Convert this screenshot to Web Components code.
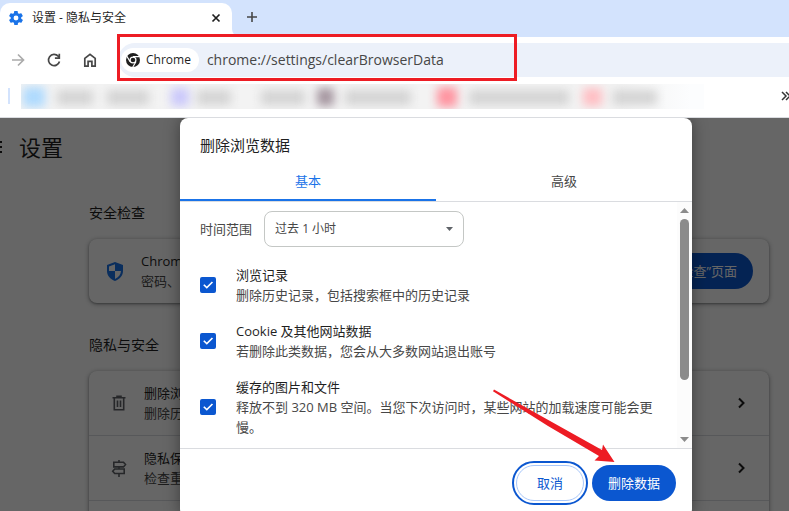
<!DOCTYPE html>
<html lang="zh-CN">
<head>
<meta charset="utf-8">
<meta name="viewport" content="width=device-width, initial-scale=1">
<title>设置 - 隐私与安全</title>
<style>
  body {
    margin: 0;
    font-family: "Open Sans", "Noto Sans CJK SC", sans-serif;
    font-size: 13px;
    line-height: 20px;
    color: #1f1f1f;
    --blue: #0b57d0;
    --muted: #474747;
    --strip: #d3e3fd;
    --mark: #ed1c24;
  }
</style>
</head>
<body>
<browser-window>
  <tab-strip slot="tabs">设置 - 隐私与安全</tab-strip>
  <tool-bar slot="toolbar">
    <address-bar value="chrome://settings/clearBrowserData">Chrome</address-bar>
  </tool-bar>
  <bookmark-bar slot="bookmarks"></bookmark-bar>

  <settings-page heading="设置">
    <settings-section heading="安全检查">
      <settings-row kind="check">
        <settings-icon slot="icon" name="shield"></settings-icon>
        <span slot="title">Chrome</span>
        <span slot="text">密码、</span>
        <pill-button slot="action" kind="filled">转到“安全检查”页面</pill-button>
      </settings-row>
    </settings-section>
    <settings-section heading="隐私与安全">
      <settings-row>
        <settings-icon slot="icon" name="trash"></settings-icon>
        <span slot="title">删除浏览数据</span>
        <span slot="text">删除历史记录</span>
        <settings-icon slot="action" name="chevron"></settings-icon>
      </settings-row>
      <settings-row>
        <settings-icon slot="icon" name="signpost"></settings-icon>
        <span slot="title">隐私保护</span>
        <span slot="text">检查重要</span>
        <settings-icon slot="action" name="chevron"></settings-icon>
      </settings-row>
      <settings-row></settings-row>
    </settings-section>

    <clear-dialog slot="dialog" heading="删除浏览数据">
      <time-range slot="body" label="时间范围">过去 1 小时</time-range>
      <data-option slot="body" label="浏览记录">删除历史记录，包括搜索框中的历史记录</data-option>
      <data-option slot="body" label="Cookie 及其他网站数据">若删除此类数据，您会从大多数网站退出账号</data-option>
      <data-option slot="body" label="缓存的图片和文件">释放不到 320 MB 空间。当您下次访问时，某些网站的加载速度可能会更慢。</data-option>
      <pill-button slot="footer" kind="outlined">取消</pill-button>
      <pill-button slot="footer" kind="filled">删除数据</pill-button>
    </clear-dialog>
  </settings-page>
</browser-window>

<script>
function define(name, render, ready) {
  customElements.define(name, class extends HTMLElement {
    constructor() {
      super();
      this.attachShadow({ mode: 'open' });
    }

    connectedCallback() {
      this.shadowRoot.innerHTML = render(this);
      if (ready) ready(this, this.shadowRoot);
    }
  });
}

define('browser-window', () => `
  <style>
    :host {
      display: flex;
      flex-direction: column;
      position: relative;
      height: 100vh;
      overflow: hidden;
      background: #fff;
    }
    .arrow {
      position: absolute;
      left: 492px;
      top: 388px;
      pointer-events: none;
    }
  </style>
  <slot name="tabs"></slot>
  <slot name="toolbar"></slot>
  <slot name="bookmarks"></slot>
  <slot></slot>
  <svg class="arrow" width="124" height="76" viewBox="0 0 124 76" aria-hidden="true">
    <path fill="var(--mark)" d="M2 1.600 110 62 111 56.500 122.500 74 102.500 72.500 107 68 56 38 1 3.200Z"/>
  </svg>
`);

define('tab-strip', () => `
  <style>
    :host {
      display: flex;
      align-items: flex-end;
      height: 37px;
      background: var(--strip);
    }
    .tab {
      display: flex;
      align-items: center;
      gap: 9px;
      box-sizing: border-box;
      width: 232px;
      height: 34px;
      padding: 0 8px 4px 9px;
      border-radius: 10px 10px 0 0;
      background: #fff;
      font-size: 12px;
    }
    .label { flex: 1; }
    svg { display: block; }
    button {
      padding: 0;
      border: 0;
      background: none;
      color: inherit;
    }
    .new { padding: 0 0 14px 6px; }
  </style>
  <div class="tab">
    <svg width="14" height="14" viewBox="2 2 20 20"><path fill="#1a73e8" d="M19.400 13a7.500 7.500 0 0 0 0-2l2.100-1.600a.5.5 0 0 0 .1-.7l-2-3.400a.5.5 0 0 0-.6-.2l-2.500 1a7.300 7.300 0 0 0-1.700-1l-.4-2.600a.5.5 0 0 0-.5-.5h-4a.5.5 0 0 0-.5.400l-.4 2.700a7.700 7.700 0 0 0-1.700 1L4.900 5.100a.5.5 0 0 0-.6.2l-2 3.400a.5.5 0 0 0 .1.700L4.500 11a8 8 0 0 0 0 2l-2.100 1.600a.5.5 0 0 0-.1.700l2 3.400c.1.200.4.3.6.2l2.500-1c.5.4 1.100.7 1.700 1l.4 2.600c0 .3.2.5.5.5h4c.2 0 .5-.2.500-.5l.4-2.600a7.300 7.300 0 0 0 1.700-1l2.500 1c.2.1.5 0 .6-.2l2-3.400a.5.5 0 0 0-.1-.7zM12 15.500a3.500 3.500 0 1 1 0-7 3.500 3.500 0 0 1 0 7z"/></svg>
    <span class="label"><slot></slot></span>
    <button aria-label="关闭"><svg width="16" height="16" viewBox="0 0 16 16"><path d="M4.500 4.500l7 7M11.500 4.500l-7 7" stroke="#1f1f1f" stroke-width="1.700"/></svg></button>
  </div>
  <svg width="8" height="8" viewBox="0 0 8 8"><path d="M0 0a8 8 0 0 0 8 8H0z" fill="#fff"/></svg>
  <button class="new" aria-label="新标签页"><svg width="12" height="12" viewBox="0 0 12 12"><path d="M6 1v10M1 6h10" stroke="#474747" stroke-width="1.600"/></svg></button>
`);

define('tool-bar', () => `
  <style>
    :host {
      display: flex;
      align-items: center;
      gap: 16px;
      padding: 6px 0 6px 8px;
    }
    button {
      width: 20px;
      height: 20px;
      padding: 0;
      border: 0;
      background: none;
      color: var(--muted);
    }
    .off { color: #ababab; }
    svg { display: block; fill: none; stroke: currentColor; stroke-width: 1.700; }
    ::slotted(*) { flex: 1; }
  </style>
  <button class="off" aria-label="前进"><svg width="20" height="20" viewBox="0 0 20 20"><path d="M4 10h11M10 4.500l5.500 5.500-5.500 5.500"/></svg></button>
  <button aria-label="重新加载"><svg width="20" height="20" viewBox="0 0 20 20"><path d="M15.500 11.500a5.600 5.600 0 1 1-1.300-5.300l1.300 1.500"/><path d="M15.300 3.800v4.400h-4.400"/></svg></button>
  <button aria-label="首页"><svg width="20" height="20" viewBox="0 0 20 20"><path d="M4.800 16.200V8.300L10 4.300l5.200 4v7.900h-3.300v-4.900H8.100v4.900z"/></svg></button>
  <slot></slot>
`);

define('address-bar', (el) => `
  <style>
    :host {
      display: flex;
      align-items: center;
      gap: 8px;
      position: relative;
      height: 34px;
      margin-left: 2px;
      padding-left: 3px;
      border-radius: 17px 0 0 17px;
      background: #ecf1fa;
    }
    .chip {
      display: flex;
      align-items: center;
      gap: 6px;
      height: 24px;
      padding: 0 8px 0 5px;
      border: 0;
      border-radius: 12px;
      background: #fff;
      color: #1f1f1f;
      font: inherit;
      font-size: 12px;
    }
    input {
      flex: 1;
      min-width: 0;
      padding: 0;
      border: 0;
      outline: 0;
      background: none;
      color: var(--muted);
      font: inherit;
      font-size: 14px;
    }
    .mark {
      position: absolute;
      left: -1px;
      top: -9px;
      box-sizing: border-box;
      width: 400px;
      height: 47px;
      border: 3px solid var(--mark);
      pointer-events: none;
    }
  </style>
  <button class="chip">
    <svg width="14" height="14" viewBox="0 0 14 14">
      <circle cx="7" cy="7" r="7" fill="#1f1f1f"/>
      <circle cx="7" cy="7" r="3.500" fill="#fff"/>
      <circle cx="7" cy="7" r="2.300" fill="#1f1f1f"/>
      <path d="M7 3.700h6.600M4.100 8.700 .9 3.200M9.900 8.700l-3.200 5.500" stroke="#fff" stroke-width="1.200"/>
    </svg>
    <slot></slot>
  </button>
  <input type="text" aria-label="地址栏" value="${el.getAttribute('value')}">
  <span class="mark"></span>
`);

define('bookmark-bar', () => `
  <style>
    :host {
      display: flex;
      align-items: center;
      height: 28px;
      margin-top: -1px;
      padding: 0 0 7px 8px;
      border-bottom: 1px solid #dadce0;
    }
    .divider {
      width: 2px;
      height: 16px;
      margin-right: 11px;
      background: var(--strip);
    }
    .items {
      width: 683px;
      height: 25px;
      overflow: hidden;
      background: linear-gradient(90deg, #f3f3f3 600px, #fcfdfe 670px);
    }
    /* the bookmarks are smudged out */
    .items svg { display: block; filter: blur(5px); }
    button {
      margin-left: auto;
      padding: 0;
      border: 0;
      background: none;
    }
    button svg { display: block; }
  </style>
  <span class="divider"></span>
  <div class="items">
    <svg width="683" height="25" viewBox="0 0 683 25" aria-hidden="true">
      <path fill="#d4d4d4" d="M36 6h36v15H36zM86 6h42v15H86zM176 6h34v15h-34zM240 6h44v15h-44zM324 6h66v15h-66zM448 6h100v15H448zM592 6h44v15h-44z"/>
      <path fill="#aedafe" d="M2 3h22v20H2z"/>
      <path fill="#cac8fb" d="M150 4h18v18h-18z"/>
      <path fill="#a4959f" d="M296 4h17v18h-17z"/>
      <path fill="#ff94a0" d="M416 3h20v20h-20z"/>
      <path fill="#ffbec3" d="M562 4h19v18h-19z"/>
    </svg>
  </div>
  <button aria-label="更多书签"><svg width="8" height="10" viewBox="0 0 8 10"><path d="M1 1l4 4-4 4M5 1l4 4-4 4" fill="none" stroke="#333" stroke-width="1.500"/></svg></button>
`);

define('settings-page', (el) => `
  <style>
    :host {
      display: block;
      position: relative;
      flex: 1;
      min-height: 0;
      overflow: hidden;
    }
    header {
      display: flex;
      align-items: center;
      gap: 17px;
      height: 58px;
    }
    h1 {
      margin: 0;
      font-size: 22px;
      line-height: 32px;
      font-weight: 400;
    }
    main {
      display: flex;
      flex-direction: column;
      gap: 32px;
      margin: 27px 20px 0 89px;
    }
    .scrim {
      position: absolute;
      inset: 0;
      display: flex;
      justify-content: center;
      align-items: flex-start;
      padding-left: 83px;
      background: rgba(0, 0, 0, 0.6);
    }
  </style>
  <header>
    <svg width="2" height="12" viewBox="0 0 2 12"><path d="M0 1h2M0 6h2M0 11h2" stroke="#1f1f1f" stroke-width="2"/></svg>
    <h1>${el.getAttribute('heading')}</h1>
  </header>
  <main><slot></slot></main>
  <div class="scrim"><slot name="dialog"></slot></div>
`);

define('settings-section', (el) => `
  <style>
    :host { display: block; }
    h2 {
      margin: 0 0 16px;
      font-size: 14px;
      line-height: 20px;
      font-weight: 400;
    }
    .card {
      border-radius: 8px;
      background: #fff;
      box-shadow: 0 1px 2px rgba(60, 64, 67, 0.4), 0 1px 4px 1px rgba(60, 64, 67, 0.3);
    }
  </style>
  <h2>${el.getAttribute('heading')}</h2>
  <div class="card"><slot></slot></div>
`);

define('settings-row', () => `
  <style>
    :host {
      display: flex;
      align-items: center;
      gap: 15px;
      height: 64px;
      padding: 0 18px 0 20px;
    }
    :host([kind="check"]) {
      gap: 16px;
      padding: 0 16px;
    }
    :host(:not(:first-child)) { border-top: 1px solid #dadce0; }
    .texts { display: flex; flex-direction: column; flex: 1; }
    .text { color: var(--muted); }
  </style>
  <slot name="icon"></slot>
  <div class="texts">
    <slot name="title"></slot>
    <span class="text"><slot name="text"></slot></span>
  </div>
  <slot name="action"></slot>
`);

const icons = {
  shield: '<path fill="#1a73e8" fill-rule="evenodd" d="M10 1 18 4v6c0 4.600-3.200 8.300-8 10-4.800-1.700-8-5.400-8-10V4zM10 3.200V10H4V5.400zM10 10h6c-.2 3.600-2.400 6.500-6 7.900z"/>',
  trash: '<path fill="none" stroke="#5f6368" stroke-width="1.600" d="M3.500 4.800h13M8 4.500V3.300h4v1.200M5.300 5v11.700h9.400V5M8.500 7.500v6.500M11.500 7.500v6.500"/>',
  signpost: '<path fill="none" stroke="#5f6368" stroke-width="1.600" d="M10 2v2M10 9v2M10 15.500v3.500M4.800 4.300h9.700l2 2.300-2 2.300H4.800zM15.200 11H5.700l-2 2.200 2 2.300h9.500z"/>',
  chevron: '<path fill="none" stroke="#1f1f1f" stroke-width="2" d="M8 5.500l4.500 4.500L8 14.500"/>'
};

define('settings-icon', (el) => `
  <style>
    :host { display: block; }
    svg { display: block; }
  </style>
  <svg width="20" height="20" viewBox="0 0 20 20">${icons[el.getAttribute('name')]}</svg>
`);

define('clear-dialog', (el) => `
  <style>
    :host {
      display: flex;
      flex-direction: column;
      width: 512px;
      border-radius: 8px;
      background: #fff;
      box-shadow: 0 0 16px rgba(0, 0, 0, 0.4);
    }
    h2 {
      margin: 0;
      padding: 17px 20px 8px;
      font-size: 15px;
      line-height: 20px;
      font-weight: 400;
    }
    .tabs {
      display: grid;
      grid-template-columns: 1fr 1fr;
      border-bottom: 1px solid #dadce0;
    }
    .tabs button {
      height: 38px;
      padding: 0;
      border: 0;
      border-bottom: 2px solid transparent;
      background: none;
      color: var(--muted);
      font: inherit;
    }
    .tabs button[aria-selected="true"] {
      border-color: #1a73e8;
      color: #1a73e8;
    }
    .body {
      display: flex;
      border-bottom: 1px solid #dadce0;
    }
    .content {
      display: flex;
      flex-direction: column;
      flex: 1;
      gap: 16px;
      padding: 9px 20px 11px;
    }
    .bar {
      display: flex;
      flex-direction: column;
      align-items: center;
      gap: 6px;
      width: 15px;
      padding: 6px 0;
      box-sizing: border-box;
      background: #fcfcfc;
    }
    .bar svg { display: block; }
    .thumb {
      width: 9px;
      height: 161px;
      border-radius: 5px;
      background: #8b8b8b;
    }
    .down { margin-top: auto; }
    footer {
      display: flex;
      justify-content: flex-end;
      gap: 8px;
      padding: 16px;
    }
  </style>
  <h2>${el.getAttribute('heading')}</h2>
  <div class="tabs" role="tablist">
    <button role="tab" aria-selected="true">基本</button>
    <button role="tab" aria-selected="false">高级</button>
  </div>
  <div class="body">
    <div class="content"><slot name="body"></slot></div>
    <div class="bar" aria-hidden="true">
      <svg width="9" height="5" viewBox="0 0 9 5"><path d="M4.500 0 9 5H0z" fill="#8b8b8b"/></svg>
      <span class="thumb"></span>
      <svg class="down" width="9" height="5" viewBox="0 0 9 5"><path d="M4.500 5 9 0H0z" fill="#8b8b8b"/></svg>
    </div>
  </div>
  <footer><slot name="footer"></slot></footer>
`, (el, root) => {
  const tabs = root.querySelectorAll('[role="tab"]');
  tabs.forEach(tab => tab.addEventListener('click', () => {
    tabs.forEach(other => other.setAttribute('aria-selected', other === tab));
  }));
});

define('time-range', (el) => `
  <style>
    :host {
      display: flex;
      align-items: center;
      gap: 12px;
      margin-bottom: 2px;
      color: var(--muted);
    }
    .field { display: grid; align-items: center; width: 200px; }
    select, svg { grid-area: 1 / 1; }
    select {
      appearance: none;
      height: 36px;
      padding: 0 24px 0 10px;
      border: 1px solid #c4c7c5;
      border-radius: 8px;
      background: #fff;
      color: inherit;
      font: inherit;
      font-size: 12px;
    }
    svg { justify-self: end; margin-right: 11px; pointer-events: none; }
  </style>
  <label for="range">${el.getAttribute('label')}</label>
  <div class="field">
    <select id="range"><option>${el.textContent}</option></select>
    <svg width="7" height="4" viewBox="0 0 7 4"><path d="M0 0h7L3.500 4z" fill="#5f6368"/></svg>
  </div>
`);

define('data-option', (el) => `
  <style>
    :host { display: block; }
    label { display: flex; align-items: center; gap: 20px; }
    input {
      appearance: none;
      display: grid;
      place-items: center;
      flex: none;
      width: 16px;
      height: 16px;
      margin: 0;
      border: 2px solid var(--muted);
      border-radius: 2px;
    }
    input:checked { border-color: var(--blue); background: var(--blue); }
    input:checked::before {
      content: "";
      width: 12px;
      height: 12px;
      background: #fff;
      clip-path: polygon(10% 52%, 20% 43%, 40% 63%, 82% 20%, 92% 30%, 40% 82%);
    }
    .texts { display: flex; flex-direction: column; }
    .text { color: var(--muted); }
  </style>
  <label>
    <input type="checkbox" checked>
    <span class="texts">
      <span>${el.getAttribute('label')}</span>
      <span class="text"><slot></slot></span>
    </span>
  </label>
`);

define('pill-button', () => `
  <style>
    :host { display: block; }
    button {
      height: 36px;
      padding: 0 16px;
      border: 0;
      border-radius: 18px;
      background: var(--blue);
      color: #fff;
      font: inherit;
      white-space: nowrap;
    }
    :host([kind="outlined"]) button {
      padding: 0 20px;
      border: 1px solid #a8c7fa;
      background: #fff;
      color: var(--blue);
      outline: 2px solid var(--blue);
      outline-offset: 2px;
    }
  </style>
  <button><slot></slot></button>
`);
</script>
</body>
</html>
